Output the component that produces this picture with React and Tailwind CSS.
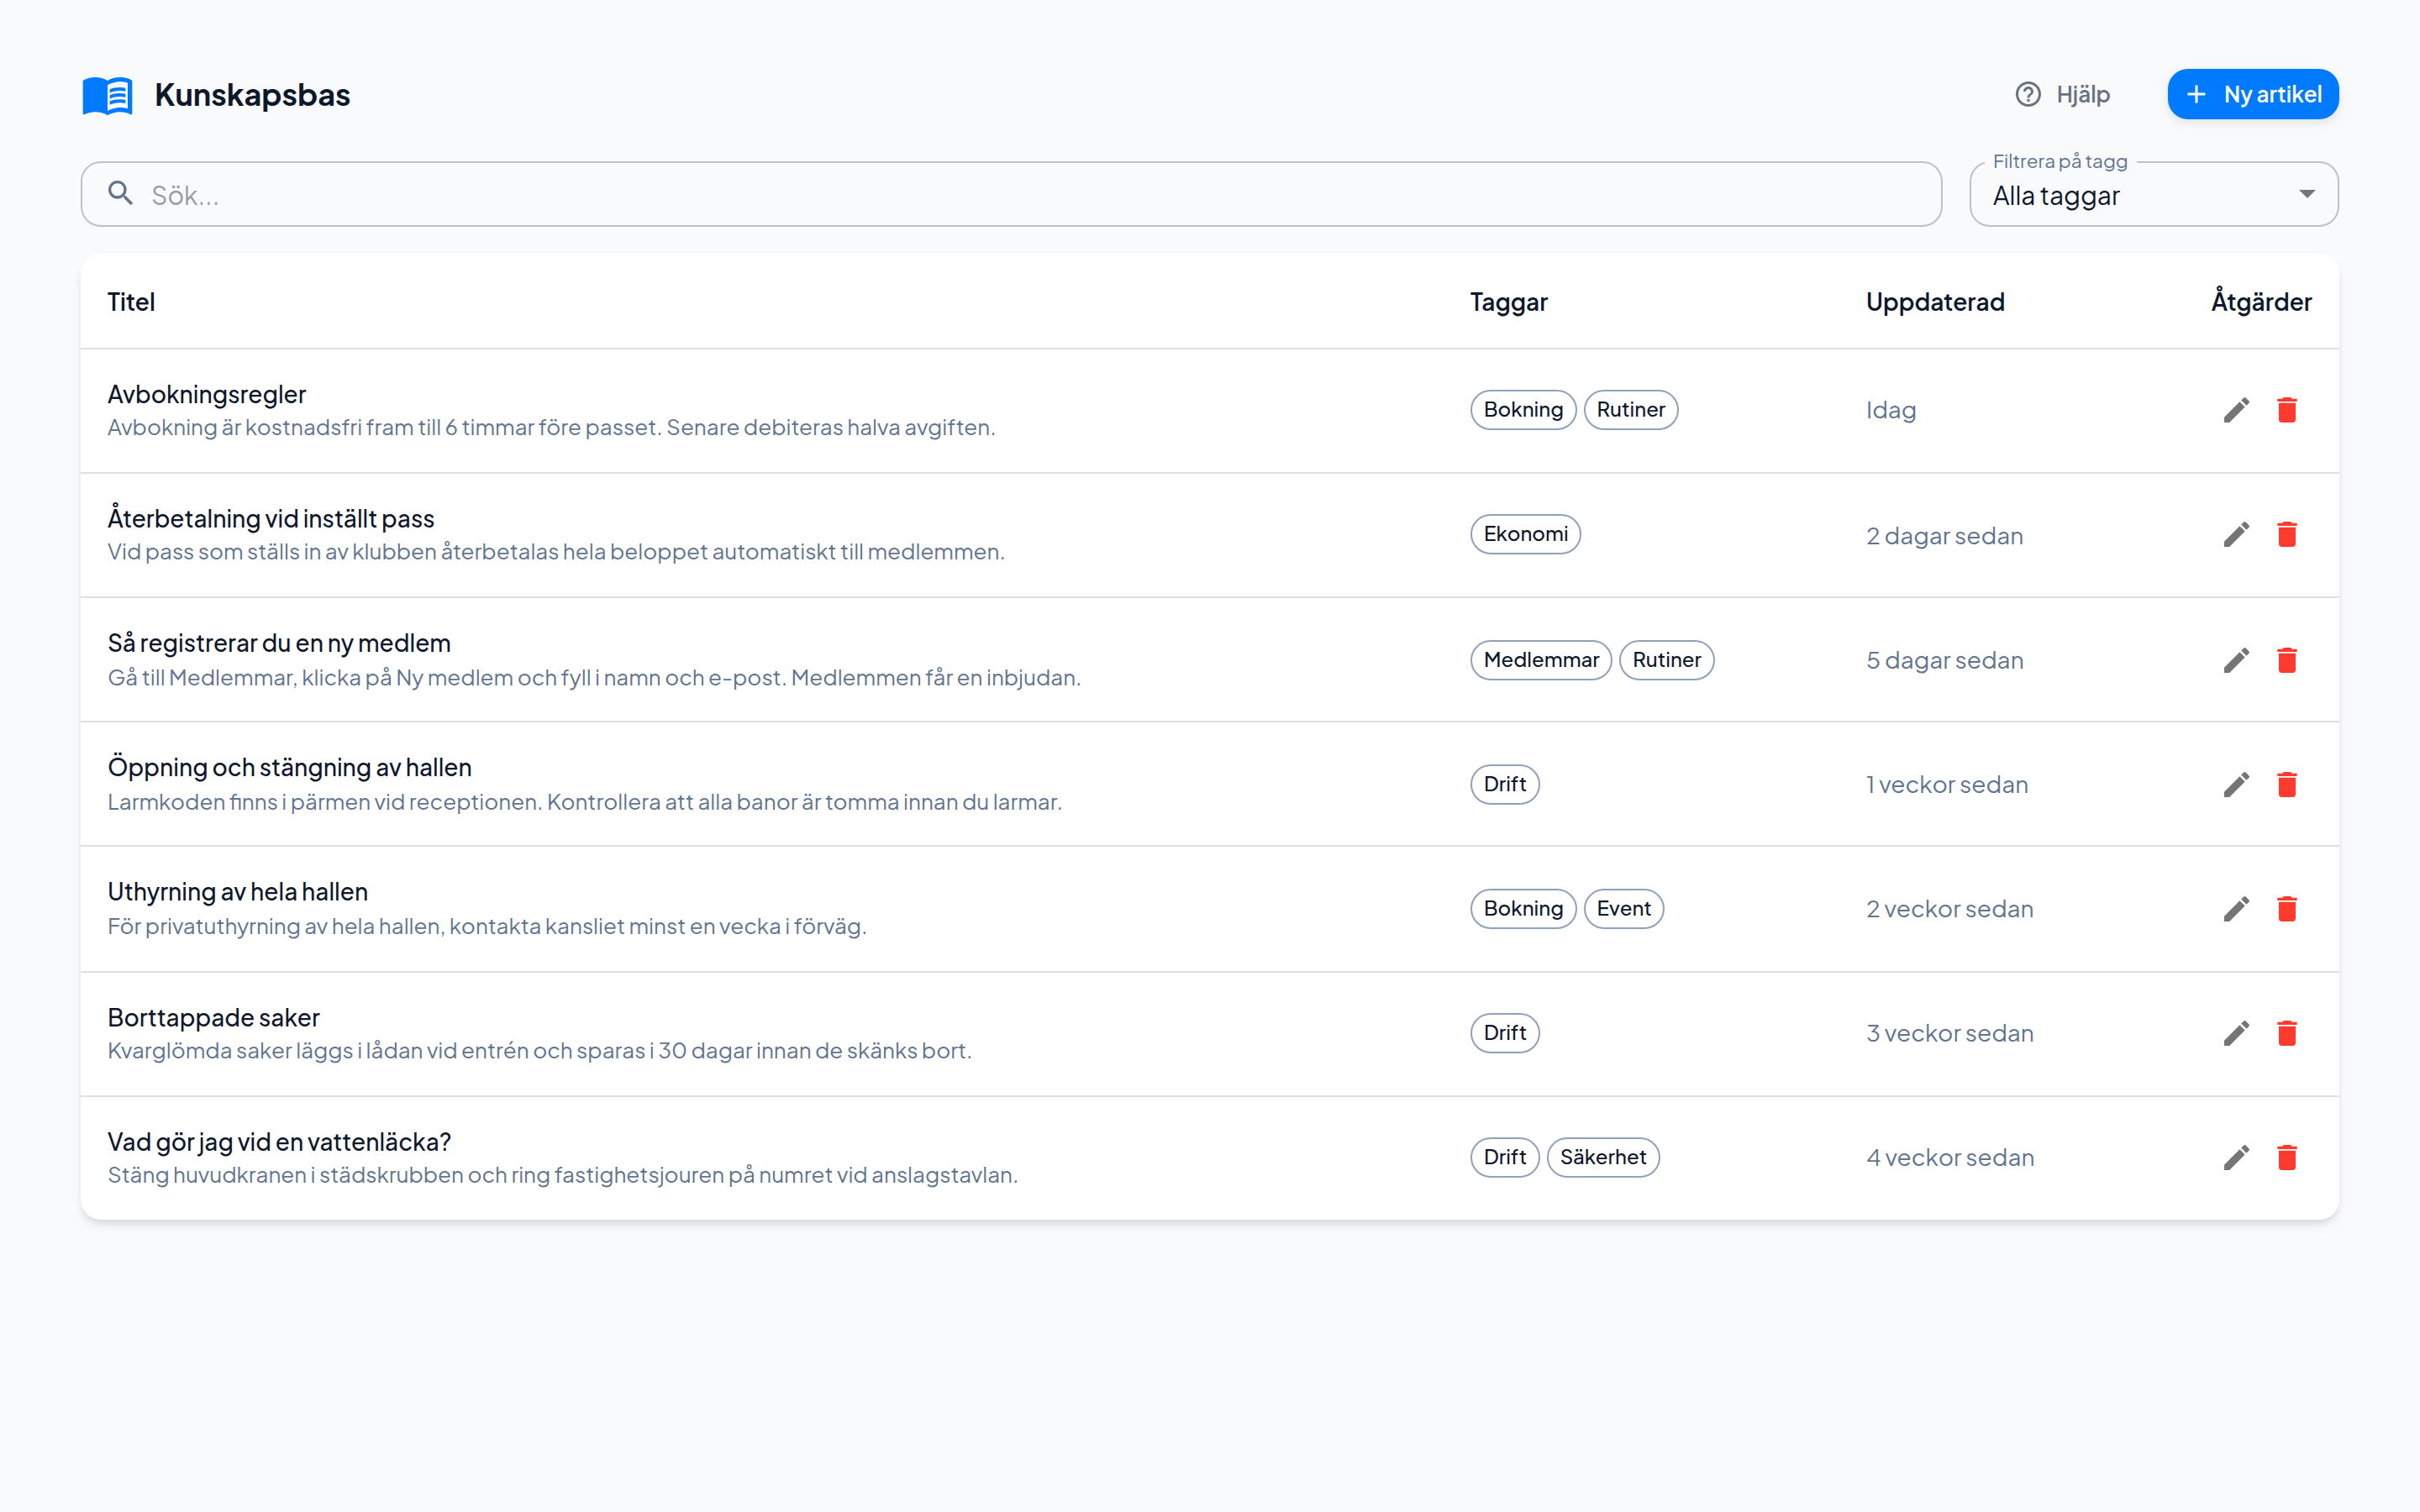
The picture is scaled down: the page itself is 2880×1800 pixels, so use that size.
import { useMemo, useState } from "react";
import clsx from "clsx";
import {
  MdAdd,
  MdArrowDropDown,
  MdDelete,
  MdEdit,
  MdHelpOutline,
  MdMenuBook,
  MdSearch,
} from "react-icons/md";

const ARTICLES = [
  {
    id: 1,
    title: "Avbokningsregler",
    summary: "Avbokning är kostnadsfri fram till 6 timmar före passet. Senare debiteras halva avgiften.",
    tags: ["Bokning", "Rutiner"],
    updated: "Idag",
  },
  {
    id: 2,
    title: "Återbetalning vid inställt pass",
    summary: "Vid pass som ställs in av klubben återbetalas hela beloppet automatiskt till medlemmen.",
    tags: ["Ekonomi"],
    updated: "2 dagar sedan",
  },
  {
    id: 3,
    title: "Så registrerar du en ny medlem",
    summary: "Gå till Medlemmar, klicka på Ny medlem och fyll i namn och e-post. Medlemmen får en inbjudan.",
    tags: ["Medlemmar", "Rutiner"],
    updated: "5 dagar sedan",
  },
  {
    id: 4,
    title: "Öppning och stängning av hallen",
    summary: "Larmkoden finns i pärmen vid receptionen. Kontrollera att alla banor är tomma innan du larmar.",
    tags: ["Drift"],
    updated: "1 veckor sedan",
  },
  {
    id: 5,
    title: "Uthyrning av hela hallen",
    summary: "För privatuthyrning av hela hallen, kontakta kansliet minst en vecka i förväg.",
    tags: ["Bokning", "Event"],
    updated: "2 veckor sedan",
  },
  {
    id: 6,
    title: "Borttappade saker",
    summary: "Kvarglömda saker läggs i lådan vid entrén och sparas i 30 dagar innan de skänks bort.",
    tags: ["Drift"],
    updated: "3 veckor sedan",
  },
  {
    id: 7,
    title: "Vad gör jag vid en vattenläcka?",
    summary: "Stäng huvudkranen i städskrubben och ring fastighetsjouren på numret vid anslagstavlan.",
    tags: ["Drift", "Säkerhet"],
    updated: "4 veckor sedan",
  },
];

function Tag({ children }) {
  return (
    <span className="flex h-12 items-center rounded-full border-2 border-slate-400 pr-[13.5px] pl-3.5 pb-1 text-[24px] leading-[30px] font-medium text-slate-900">
      {children}
    </span>
  );
}

function Header() {
  return (
    <header className="flex h-16 items-center">
      <MdMenuBook className="size-16 text-[#007aff]" />
      <h1 className="ml-6 text-[36px] leading-[44px] font-bold">Kunskapsbas</h1>

      <button type="button" className="ml-auto flex items-center gap-4 text-[26px] leading-8 font-semibold text-gray-500">
        <MdHelpOutline className="size-9" />
        Hjälp
      </button>

      <button
        type="button"
        className="ml-[68px] flex h-[60px] w-[204px] items-center gap-[15px] rounded-3xl bg-[#007aff] pl-4 text-[26px] leading-8 font-semibold text-white shadow-[0_4px_12px_rgba(0,0,0,0.1)]"
      >
        <MdAdd className="size-9" />
        <span className="whitespace-nowrap">Ny artikel</span>
      </button>
    </header>
  );
}

function Row({ article, index }) {
  // sub-pixel row heights: the middle rows sit a step lower
  const low = index >= 2 && index <= 4;

  return (
    <div
      className={clsx(
        "flex items-start",
        index < 6 && "border-b-2 border-[#e0e0e0]",
        index === 4 ? "h-[150px]" : index === 6 ? "h-[146px]" : "h-[148px]",
      )}
    >
      <div className="w-[1622px] px-8 pt-8">
        <div className="text-[28px] leading-[41px] font-medium">{article.title}</div>
        <div className={clsx("text-[26px] leading-[37px] text-slate-500", low && "mt-0.5")}>
          {article.summary}
        </div>
      </div>

      <div className={clsx("flex w-[471px] gap-2 px-8", low ? "pt-[50px]" : "pt-12")}>
        {article.tags.map((t) => (
          <Tag key={t}>{t}</Tag>
        ))}
      </div>

      <div
        className={clsx(
          "pl-8 text-[28px] leading-[35px] text-slate-500",
          low || index === 1 ? "pt-[55px]" : "pt-[53px]",
        )}
      >
        {article.updated}
      </div>

      <div className={clsx("ml-auto flex pr-8", low ? "pt-11" : "pt-[42px]")}>
        <button type="button" aria-label="Redigera" className="p-2.5 text-[#757575]">
          <MdEdit className="size-10" />
        </button>
        <button type="button" aria-label="Ta bort" className="p-2.5 text-[#ff3b30]">
          <MdDelete className="size-10" />
        </button>
      </div>
    </div>
  );
}

export default function App() {
  const [query, setQuery] = useState("");

  const filtered = useMemo(() => {
    const q = query.trim().toLowerCase();
    return ARTICLES.filter((a) => a.title.toLowerCase().includes(q));
  }, [query]);

  return (
    <div className="min-h-screen bg-slate-50 px-24 pt-20 font-['Plus_Jakarta_Sans','Inter',sans-serif] text-slate-900">
      <Header />

      <div className="mt-12 flex gap-8">
        <label className="flex h-[78px] flex-1 items-center rounded-3xl border-2 border-[#c0c1c3] pl-[26px]">
          <MdSearch className="mb-0.5 size-10 text-slate-500" />
          <input
            value={query}
            onChange={(e) => setQuery(e.target.value)}
            placeholder="Sök..."
            className="ml-4 h-[38px] flex-1 pt-0.5 text-[30px] leading-[38px] outline-none placeholder:text-[#999ca1]"
          />
        </label>

        <div className="relative flex h-[78px] w-[440px] items-center justify-between rounded-3xl border-2 border-[#c0c1c3] pr-3 pl-[26px]">
          <span className="absolute -top-[17px] left-4 bg-slate-50 px-[10px] text-[22.5px] leading-7 whitespace-nowrap text-slate-500">
            Filtrera på tagg
          </span>
          <span className="pt-0.5 text-[30px] leading-[38px]">Alla taggar</span>
          <MdArrowDropDown className="mb-0.5 size-12 text-[#757575]" />
        </div>
      </div>

      <div className="mt-8 rounded-3xl bg-white shadow-[0_8px_12px_-2px_rgba(0,0,0,0.1),0_4px_8px_-2px_rgba(0,0,0,0.06)]">
        <div className="flex h-[114px] items-center border-b-2 border-[#e0e0e0] pt-0.5 text-[28px] leading-9 font-semibold">
          <div className="w-[1622px] px-8">Titel</div>
          <div className="w-[471px] px-8">Taggar</div>
          <div className="pl-8">Uppdaterad</div>
          <div className="ml-auto pr-8">Åtgärder</div>
        </div>
        {filtered.map((a, i) => (
          <Row key={a.id} article={a} index={i} />
        ))}
      </div>
    </div>
  );
}
